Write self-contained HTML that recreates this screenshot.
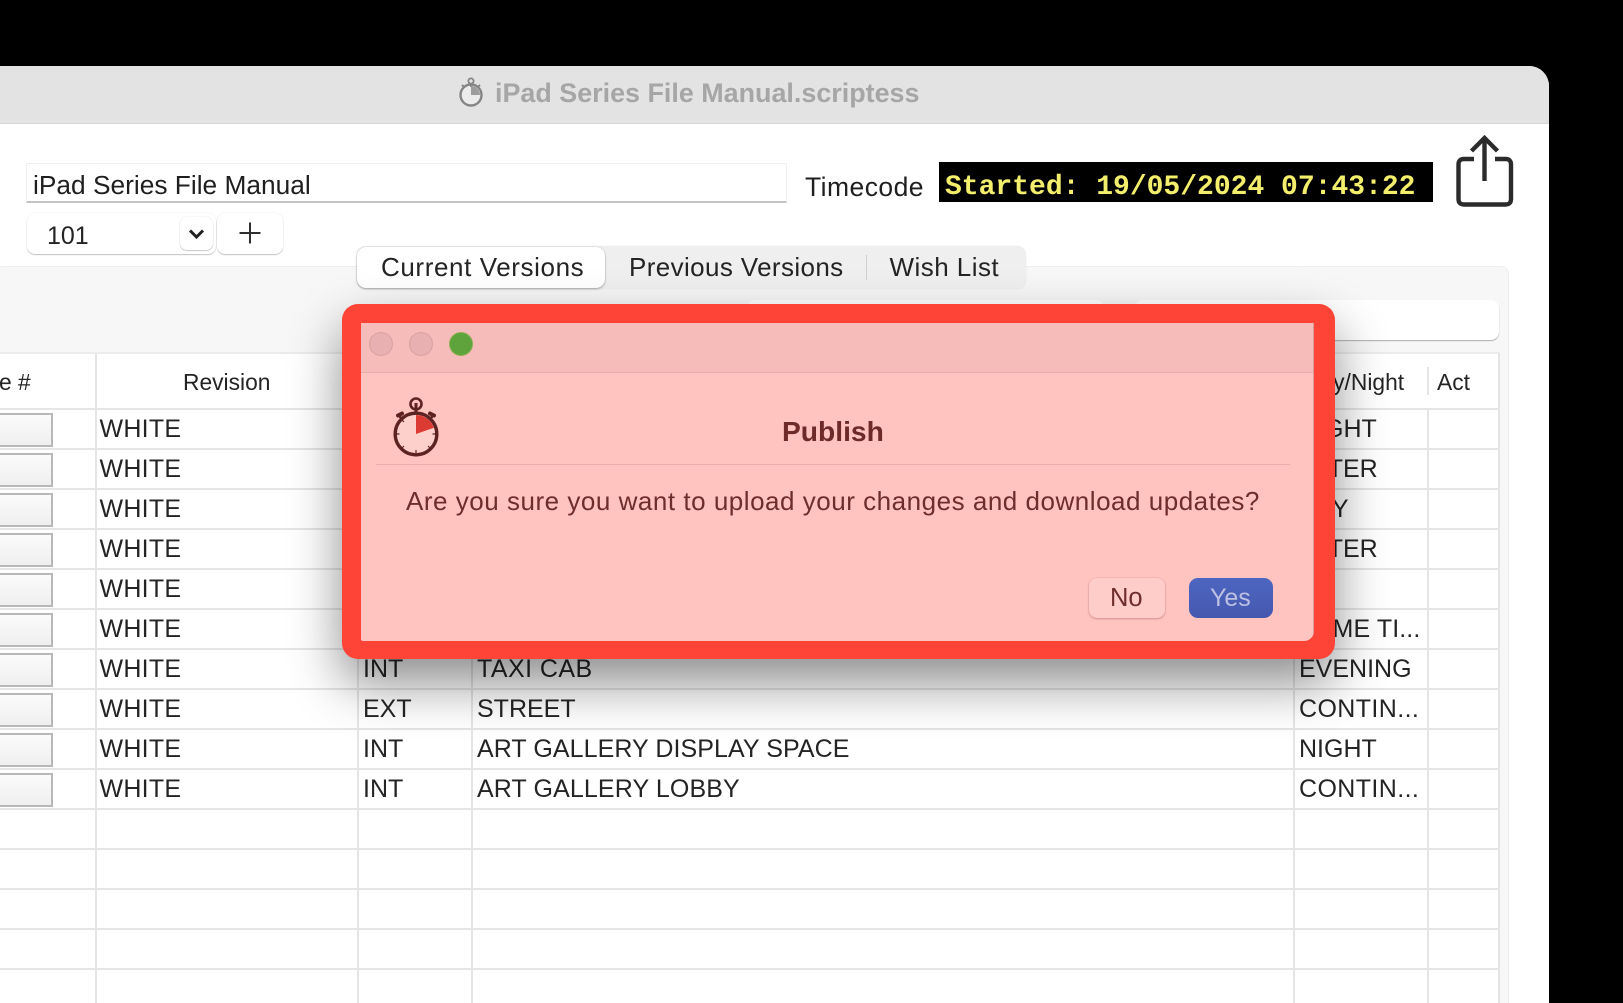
<!DOCTYPE html>
<html lang="en">
<head>
<meta charset="utf-8">
<title>iPad Series File Manual.scriptess</title>
<style>
html,body{margin:0;padding:0;background:#000;width:1623px;height:1003px;overflow:hidden}
body{position:relative;font-family:"Liberation Sans",sans-serif;color:#222}
div{box-sizing:border-box}
.a{position:absolute}
.t{position:absolute;white-space:nowrap;line-height:1;font-size:25px;color:#242424}
.w{left:99.500px;letter-spacing:.25px}
.h{position:absolute;left:0;width:1499px;height:2px;background:#e5e5e5}
.v{position:absolute;top:353px;width:2px;height:650px;background:#e5e5e5}
.b{position:absolute;left:-4px;width:57px;height:34px;border:2px solid #b8b8b8;background:linear-gradient(#fbfbfb,#efefef)}
</style>
</head>
<body>
<div class="a" id="win" style="left:0;top:66px;width:1549px;height:937px;background:#fff;border-top-right-radius:20px;overflow:hidden">
  <div class="a" style="left:0;top:0;width:1549px;height:58px;background:#e3e3e3;border-bottom:1px solid #d6d6d6"></div>
</div>

<!-- title -->
<svg class="a" style="left:457px;top:76px" width="28" height="32" viewBox="0 0 28 32" fill="none" stroke="#858585">
  <circle cx="14" cy="19" r="10.500" stroke-width="2.400" fill="#ececec"/>
  <circle cx="14" cy="5" r="2.600" stroke-width="1.800"/>
  <path d="M14 8v3M5 9l3 2.500M23 9l-3 2.500" stroke-width="2"/>
  <path d="M14 19V10A9 9 0 0 1 23 19z" fill="#9c9c9c" stroke="none"/>
</svg>
<div class="t" style="left:495px;top:80px;font-size:26.900px;font-weight:700;color:#a6a6a6">iPad Series File Manual.scriptess</div>

<!-- toolbar -->
<div class="a" style="left:26px;top:163px;width:761px;height:40px;background:#fff;border:1px solid #efefef;border-bottom:2px solid #c4c4c4"></div>
<div class="t" style="left:33px;top:172px;font-size:26.300px;color:#1f1f1f">iPad Series File Manual</div>
<div class="t" style="left:805px;top:174px;font-size:26.500px;letter-spacing:.45px;color:#1f1f1f">Timecode</div>
<div class="a" style="left:939px;top:162px;width:494px;height:40px;background:#000"></div>
<div class="t" style="left:945px;top:174px;font-family:'Liberation Mono',monospace;font-weight:700;font-size:28px;color:#f3ef6c">Started: 19/05/2024 07:43:22</div>
<svg class="a" style="left:1452px;top:132px" width="66" height="78" viewBox="0 0 66 78" fill="none" stroke="#2b2b2b" stroke-width="4.400">
  <path d="M32.500 6V49"/>
  <path d="M19.500 19L32.500 6L45.500 19"/>
  <path d="M22 27H12Q6.500 27 6.500 32.500V67Q6.500 72.500 12 72.500H53.500Q59 72.500 59 67V32.500Q59 27 53.500 27H43"/>
</svg>

<!-- episode -->
<div class="a" style="left:27px;top:213px;width:189px;height:41px;background:#fff;border-radius:8px;box-shadow:0 1px 1px rgba(0,0,0,.22),0 0 1px rgba(0,0,0,.15)"></div>
<div class="t" style="left:47px;top:224px;font-size:25px">101</div>
<div class="a" style="left:180px;top:217px;width:33px;height:33px;background:#fff;border-radius:7px;box-shadow:0 1px 1px rgba(0,0,0,.2),0 0 1px rgba(0,0,0,.18)"></div>
<svg class="a" style="left:188px;top:227px" width="17" height="14" viewBox="0 0 17 14" fill="none" stroke="#222" stroke-width="3"><path d="M2 3.500L8.500 10L15 3.500"/></svg>
<div class="a" style="left:217px;top:213px;width:66px;height:41px;background:#fff;border-radius:8px;box-shadow:0 1px 1px rgba(0,0,0,.22),0 0 1px rgba(0,0,0,.15)"></div>
<svg class="a" style="left:238px;top:221px" width="24" height="24" viewBox="0 0 24 24" stroke="#2f2f2f" stroke-width="2"><path d="M12 1.500V22.500M1.500 12H22.500"/></svg>

<!-- panel -->
<div class="a" style="left:-6px;top:266px;width:1515px;height:737px;background:#f7f7f7;border:1px solid #eeeeee;border-bottom:0;border-radius:8px 8px 0 0"></div>
<div class="a" style="left:747px;top:300px;width:357px;height:40px;background:#fff;border-radius:8px;box-shadow:0 1px 1px rgba(0,0,0,.3)"></div>
<div class="a" style="left:1135px;top:300px;width:364px;height:40px;background:#fff;border-radius:8px;box-shadow:0 1px 1px rgba(0,0,0,.3)"></div>

<!-- tabs -->
<div class="a" style="left:357px;top:246px;width:669px;height:43px;background:#efefef;border-radius:9px;box-shadow:0 0 1px rgba(0,0,0,.12)"></div>
<div class="a" style="left:357px;top:247px;width:248px;height:41px;background:#fff;border-radius:9px;box-shadow:0 1px 2px rgba(0,0,0,.3),0 0 1px rgba(0,0,0,.2)"></div>
<div class="t" style="left:381px;top:254px;font-size:26px;letter-spacing:.6px">Current Versions</div>
<div class="t" style="left:629px;top:254px;font-size:26px;letter-spacing:.38px">Previous Versions</div>
<div class="a" style="left:866px;top:255px;width:1px;height:25px;background:#cfcfcf"></div>
<div class="t" style="left:889.500px;top:254px;font-size:26px;letter-spacing:.46px">Wish List</div>

<!-- table -->
<div class="a" style="left:0;top:352px;width:1500px;height:651px;background:#fff;border-top:2px solid #ececec;border-right:2px solid #e5e5e5"></div>
<div class="v" style="left:95px"></div>
<div class="v" style="left:357px"></div>
<div class="v" style="left:471px"></div>
<div class="v" style="left:1293px"></div>
<div class="v" style="left:1427px;top:409px;height:594px"></div>
<div class="a" style="left:1427px;top:367px;width:2px;height:28px;background:#e5e5e5"></div>
<div class="h" style="top:408px"></div>
<div class="h" style="top:448px"></div>
<div class="h" style="top:488px"></div>
<div class="h" style="top:528px"></div>
<div class="h" style="top:568px"></div>
<div class="h" style="top:608px"></div>
<div class="h" style="top:648px"></div>
<div class="h" style="top:688px"></div>
<div class="h" style="top:728px"></div>
<div class="h" style="top:768px"></div>
<div class="h" style="top:808px"></div>
<div class="h" style="top:848px"></div>
<div class="h" style="top:888px"></div>
<div class="h" style="top:928px"></div>
<div class="h" style="top:968px"></div>

<div class="t" style="left:-1px;top:371px;font-size:22.800px">e #</div>
<div class="t" style="left:183px;top:371px;font-size:22.800px">Revision</div>
<div class="t" style="left:1304px;top:371px;font-size:22.800px">Day/Night</div>
<div class="t" style="left:1437px;top:371px;font-size:22.800px">Act</div>

<div class="b" style="top:413px"></div>
<div class="b" style="top:453px"></div>
<div class="b" style="top:493px"></div>
<div class="b" style="top:533px"></div>
<div class="b" style="top:573px"></div>
<div class="b" style="top:613px"></div>
<div class="b" style="top:653px"></div>
<div class="b" style="top:693px"></div>
<div class="b" style="top:733px"></div>
<div class="b" style="top:773px"></div>

<div class="t w" style="top:416.500px">WHITE</div>
<div class="t w" style="top:456.500px">WHITE</div>
<div class="t w" style="top:496.500px">WHITE</div>
<div class="t w" style="top:536.500px">WHITE</div>
<div class="t w" style="top:576.500px">WHITE</div>
<div class="t w" style="top:616.500px">WHITE</div>
<div class="t w" style="top:656.500px">WHITE</div>
<div class="t w" style="top:696.500px">WHITE</div>
<div class="t w" style="top:736.500px">WHITE</div>
<div class="t w" style="top:776.500px">WHITE</div>

<div class="t" style="left:363px;top:656.500px">INT</div>
<div class="t" style="left:363px;top:696.500px">EXT</div>
<div class="t" style="left:363px;top:736.500px">INT</div>
<div class="t" style="left:363px;top:776.500px">INT</div>
<div class="t" style="left:477px;top:656.500px;letter-spacing:.45px">TAXI CAB</div>
<div class="t" style="left:477px;top:696.500px">STREET</div>
<div class="t" style="left:477px;top:736.500px;letter-spacing:.08px">ART GALLERY DISPLAY SPACE</div>
<div class="t" style="left:477px;top:776.500px;letter-spacing:.12px">ART GALLERY LOBBY</div>

<div class="t" style="left:1299px;top:416.500px">NIGHT</div>
<div class="t" style="left:1299px;top:456.500px">LATER</div>
<div class="t" style="left:1299px;top:496.500px">DAY</div>
<div class="t" style="left:1299px;top:536.500px">LATER</div>
<div class="t" style="left:1299px;top:616.500px;letter-spacing:.1px">SAME TI...</div>
<div class="t" style="left:1299px;top:656.500px">EVENING</div>
<div class="t" style="left:1299px;top:696.500px;letter-spacing:.4px">CONTIN...</div>
<div class="t" style="left:1299px;top:736.500px">NIGHT</div>
<div class="t" style="left:1299px;top:776.500px;letter-spacing:.4px">CONTIN...</div>

<!-- dialog -->
<div class="a" style="left:342px;top:304px;width:993px;height:355px;background:#fd4437;border-radius:16px;box-shadow:0 24px 52px rgba(0,0,0,.45)"></div>
<div class="a" style="left:361px;top:323px;width:953px;height:318px;background:#ffc4c0;border-radius:0 0 10px 2px;overflow:hidden">
  <div class="a" style="left:0;top:0;width:953px;height:50px;background:#f5bcb9;border-bottom:1px solid #e8acaa"></div>
  <div class="a" style="right:0;top:0;width:1px;height:318px;background:#d99c98"></div>
</div>
<div class="a" style="left:369px;top:332px;width:24px;height:24px;border-radius:50%;background:#e8b0b0;border:1px solid #d9a2a2"></div>
<div class="a" style="left:409px;top:332px;width:24px;height:24px;border-radius:50%;background:#e8b0b0;border:1px solid #d9a2a2"></div>
<div class="a" style="left:449px;top:332px;width:24px;height:24px;border-radius:50%;background:#5fa33d;border:1px solid #8caf53"></div>

<svg class="a" style="left:386px;top:394px" width="60" height="64" viewBox="0 0 60 64" fill="none" stroke="#5d2222">
  <circle cx="30" cy="40" r="20.800" stroke-width="3.400" fill="#fed0cc"/>
  <path d="M30 40V21A19 19 0 0 1 47.900 33.800z" fill="#dc3b34" stroke="none"/>
  <circle cx="30" cy="10" r="5.500" stroke-width="2.600"/>
  <path d="M30 9v10" stroke-width="3"/>
  <path d="M15 24l-2.500-3M45 24l2.500-3" stroke-width="2.500"/>
  <path d="M12 21.500l4-2M48 21.500l-4-2" stroke-width="4" stroke-linecap="round"/>
  <path d="M30 56v3M10.500 40h3M46.500 40h3M16 26l2 2M44 54l-2-2M16 54l2-2" stroke-width="1.200"/>
</svg>
<div class="t" style="left:782px;top:417px;font-size:28.200px;font-weight:700;color:#6d2a28">Publish</div>
<div class="a" style="left:376px;top:464px;width:914px;height:1px;background:#ecaca8"></div>
<div class="t" style="left:406px;top:488px;font-size:26px;letter-spacing:.52px;color:#6f2d2b">Are you sure you want to upload your changes and download updates?</div>
<div class="a" style="left:1089px;top:578px;width:76px;height:40px;background:#fecdca;border-radius:8px;box-shadow:0 1px 2px rgba(120,40,40,.3),0 0 1px rgba(120,40,40,.3)"></div>
<div class="t" style="left:1110px;top:585.500px;font-size:25.500px;color:#6f2d2b">No</div>
<div class="a" style="left:1189px;top:578px;width:84px;height:40px;background:linear-gradient(#4d66c0,#4558b0);border-radius:9px"></div>
<div class="t" style="left:1210px;top:585.500px;font-size:25px;color:#bcc0e2">Yes</div>
</body>
</html>
